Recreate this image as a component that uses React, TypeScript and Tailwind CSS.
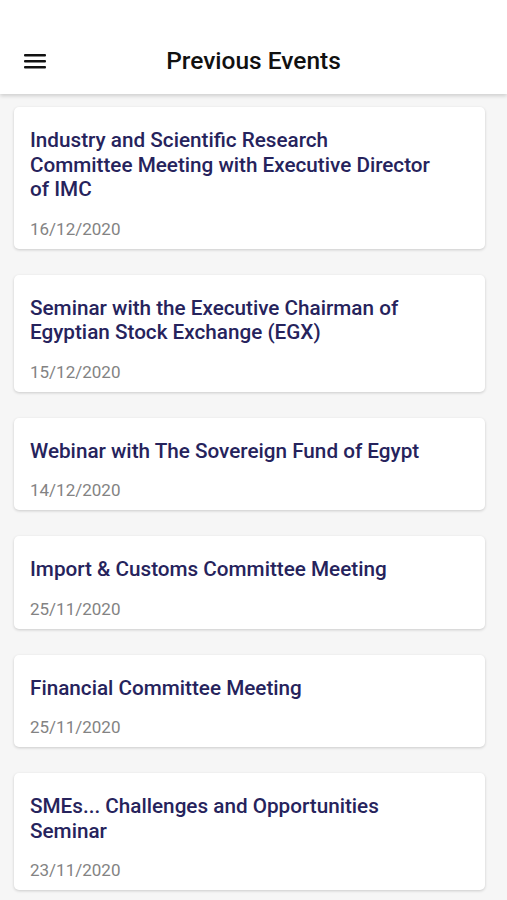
const events = [
  { title: 'Industry and Scientific Research Committee Meeting with Executive Director of IMC', date: '16/12/2020' },
  { title: 'Seminar with the Executive Chairman of Egyptian Stock Exchange (EGX)', date: '15/12/2020' },
  { title: 'Webinar with The Sovereign Fund of Egypt', date: '14/12/2020' },
  { title: 'Import & Customs Committee Meeting', date: '25/11/2020' },
  { title: 'Financial Committee Meeting', date: '25/11/2020' },
  { title: 'SMEs... Challenges and Opportunities Seminar', date: '23/11/2020' },
];

const App = () => {
  return (
    <div className="h-[900px] overflow-hidden bg-[#f6f6f6] font-['Roboto',sans-serif]">
      {/* Top bar */}
      <header className="relative z-10 h-[94px] bg-white shadow-[0_2px_4px_rgba(0,0,0,0.16)] flex items-end pb-[21px]">
        <button className="ml-[23px] w-[24px] h-[24px] flex items-center justify-center text-[#111]">
          <svg width="24" height="24" viewBox="0 0 24 24">
            <rect x="1" y="5" width="22" height="2.4" rx="1" fill="currentColor" />
            <rect x="1" y="11" width="22" height="2.4" rx="1" fill="currentColor" />
            <rect x="1" y="17" width="22" height="2.4" rx="1" fill="currentColor" />
          </svg>
        </button>
        <h1 className="flex-1 text-center pr-[47px] text-[24.5px] leading-[28px] font-medium text-[#111] mb-[-2px]">Previous Events</h1>
      </header>

      {/* Event list */}
      <div className="flex flex-col gap-[26px] pl-[14px] pr-[22px] pt-[13px]">
        {events.map((ev) => (
          <div
            key={ev.title + ev.date}
            className="bg-white rounded-[5px] shadow-[0_1px_3px_rgba(0,0,0,0.18)] pl-[16px] pr-[52px] pt-[21px] pb-[10px]"
          >
            <h2 className="text-[20.7px] leading-[24.5px] font-medium text-[#26235c]">{ev.title}</h2>
            <p className="mt-[17px] text-[17px] leading-[20px] text-[#838383]">{ev.date}</p>
          </div>
        ))}
      </div>
    </div>
  );
};

export default App;
